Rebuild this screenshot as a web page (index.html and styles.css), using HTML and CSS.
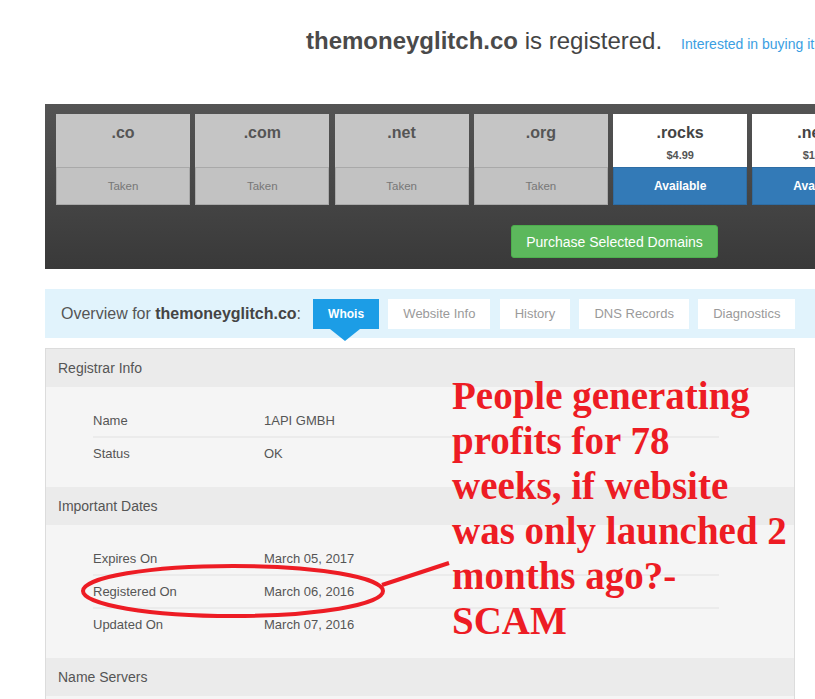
FILE: index.html
```html
<!DOCTYPE html>
<html>
<head>
<meta charset="utf-8">
<link rel="stylesheet" href="styles.css">
</head>
<body>
<div class="page">
  <header class="top">
    <h1 class="title"><b>themoneyglitch.co</b> is registered.</h1>
    <a class="buy" href="#">Interested in buying it?</a>
  </header>

  <section class="panel">
    <div class="tiles">
      <div class="tile taken"><div class="tld">.co</div><div class="status">Taken</div></div>
      <div class="tile taken"><div class="tld">.com</div><div class="status">Taken</div></div>
      <div class="tile taken"><div class="tld">.net</div><div class="status">Taken</div></div>
      <div class="tile taken"><div class="tld">.org</div><div class="status">Taken</div></div>
      <div class="tile free"><div class="tld">.rocks<span class="price">$4.99</span></div><div class="status">Available</div></div>
      <div class="tile free"><div class="tld">.news<span class="price">$14.99</span></div><div class="status">Available</div></div>
      <div class="tile free"><div class="tld">.info<span class="price">$2.99</span></div><div class="status">Available</div></div>
      <div class="tile free"><div class="tld">.biz<span class="price">$9.99</span></div><div class="status">Available</div></div>
    </div>
    <div class="actions"><button class="purchase">Purchase Selected Domains</button></div>
  </section>

  <nav class="overview">
    <span class="ov-label">Overview for <b>themoneyglitch.co</b>:</span>
    <div class="tabs">
      <span class="tab active">Whois</span>
      <span class="tab">Website Info</span>
      <span class="tab">History</span>
      <span class="tab">DNS Records</span>
      <span class="tab">Diagnostics</span>
    </div>
  </nav>

  <div class="whois">
    <div class="sec-head">Registrar Info</div>
    <div class="sec-body">
      <div class="row"><span class="k">Name</span><span class="v">1API GMBH</span></div>
      <div class="row"><span class="k">Status</span><span class="v">OK</span></div>
    </div>
    <div class="sec-head">Important Dates</div>
    <div class="sec-body">
      <div class="row"><span class="k">Expires On</span><span class="v">March 05, 2017</span></div>
      <div class="row"><span class="k">Registered On</span><span class="v">March 06, 2016</span></div>
      <div class="row"><span class="k">Updated On</span><span class="v">March 07, 2016</span></div>
    </div>
    <div class="sec-head">Name Servers</div>
    <div class="sec-body">
      <div class="row"><span class="k">&nbsp;</span><span class="v"></span></div>
    </div>
  </div>
</div>

<svg class="marks" width="815" height="699" viewBox="0 0 815 699">
  <ellipse cx="233" cy="591" rx="150" ry="25" fill="none" stroke="#ed1c24" stroke-width="4"/>
  <line x1="382" y1="585" x2="449" y2="563" stroke="#ed1c24" stroke-width="4"/>
</svg>
<div class="note">People generating<br>profits for 78<br>weeks, if website<br>was only launched 2<br>months ago?-<br>SCAM</div>
</body>
</html>
```

FILE: styles.css
```css
html, body {
  margin: 0;
  padding: 0;
  overflow: hidden;
  background: #ffffff;
}
body {
  font-family: "Liberation Sans", Arial, sans-serif;
  color: #555;
  position: relative;
  width: 815px;
  height: 699px;
}
.page {
  width: 1139px;
  margin-left: 45px;
}
.top {
  display: flex;
  align-items: baseline;
  height: 104px;
  box-sizing: border-box;
  padding: 26px 0 0 261px;
}
.title {
  margin: 0;
  font-size: 24px;
  font-weight: normal;
  color: #444;
  line-height: 30px;
}
.title b { color: #4a4a4a; }
.buy {
  margin-left: 19px;
  font-size: 14px;
  color: #3a9ee2;
  text-decoration: none;
  white-space: nowrap;
}

.panel {
  height: 165px;
  box-sizing: border-box;
  padding: 10px 11px 0;
  background: linear-gradient(#545454, #393939);
}
.tiles {
  display: grid;
  grid-template-columns: repeat(8, 134px);
  column-gap: 5.3px;
}
.tile {
  height: 91px;
  display: flex;
  flex-direction: column;
  text-align: center;
}
.tld {
  height: 53px;
  box-sizing: border-box;
  padding-top: 10px;
  font-size: 16px;
  font-weight: bold;
  color: #555;
  background: #c5c5c5;
  display: flex;
  flex-direction: column;
  align-items: center;
}
.price {
  margin-top: 7px;
  font-size: 11px;
  color: #555;
}
.status {
  flex: 1;
  box-sizing: border-box;
  line-height: 36px;
  font-size: 11.5px;
  border: 1px solid #a9a9a9;
  background: #c2c2c2;
  color: #777;
}
.free .tld { background: #ffffff; color: #444; }
.free .status {
  background: #337ab7;
  border-color: #2e6da4;
  color: #fff;
  font-weight: bold;
  font-size: 12px;
}
.actions {
  display: flex;
  justify-content: center;
  margin-top: 20px;
}
.purchase {
  height: 33px;
  padding: 0 14px;
  border: 1px solid #4cae4c;
  border-radius: 3px;
  background: #5cb85c;
  color: #fff;
  font-family: "Liberation Sans", Arial, sans-serif;
  font-size: 14px;
}

.overview {
  margin-top: 20px;
  height: 49px;
  background: #e1f3fc;
  display: flex;
  align-items: center;
  padding-left: 16px;
}
.ov-label {
  font-size: 16px;
  color: #555;
  margin-right: 12px;
}
.ov-label b { color: #444; }
.tabs {
  display: flex;
  gap: 9.3px;
}
.tab {
  position: relative;
  height: 30px;
  line-height: 30px;
  padding: 0 15px;
  background: #fff;
  color: #9a9a9a;
  font-size: 13px;
  white-space: nowrap;
}
.tab.active {
  background: #1c9de6;
  color: #fff;
  font-weight: bold;
  font-size: 12px;
}
.tab.active::after {
  content: "";
  position: absolute;
  left: 50%;
  top: 30px;
  margin-left: -16px;
  border-left: 15px solid transparent;
  border-right: 15px solid transparent;
  border-top: 12px solid #1c9de6;
}

.whois {
  width: 750px;
  box-sizing: border-box;
  margin-top: 10px;
  border: 1px solid #dcdcdc;
  background: #f5f5f5;
}
.sec-head {
  height: 38px;
  line-height: 38px;
  padding-left: 12px;
  background: #ebebeb;
  font-size: 14px;
  color: #555;
}
.sec-body {
  padding: 18px 75px 18px 47px;
}
.row {
  display: flex;
  height: 31px;
  line-height: 31px;
  font-size: 13px;
  color: #555;
}
.row + .row { border-top: 2px solid #ebebeb; }
.k { width: 171px; }

.marks {
  position: absolute;
  left: 0;
  top: 0;
  pointer-events: none;
}
.note {
  position: absolute;
  left: 452px;
  top: 373px;
  font-family: "Liberation Serif", "Times New Roman", serif;
  font-weight: bold;
  font-size: 39px;
  color: #ed1c24;
  white-space: nowrap;
}
```
